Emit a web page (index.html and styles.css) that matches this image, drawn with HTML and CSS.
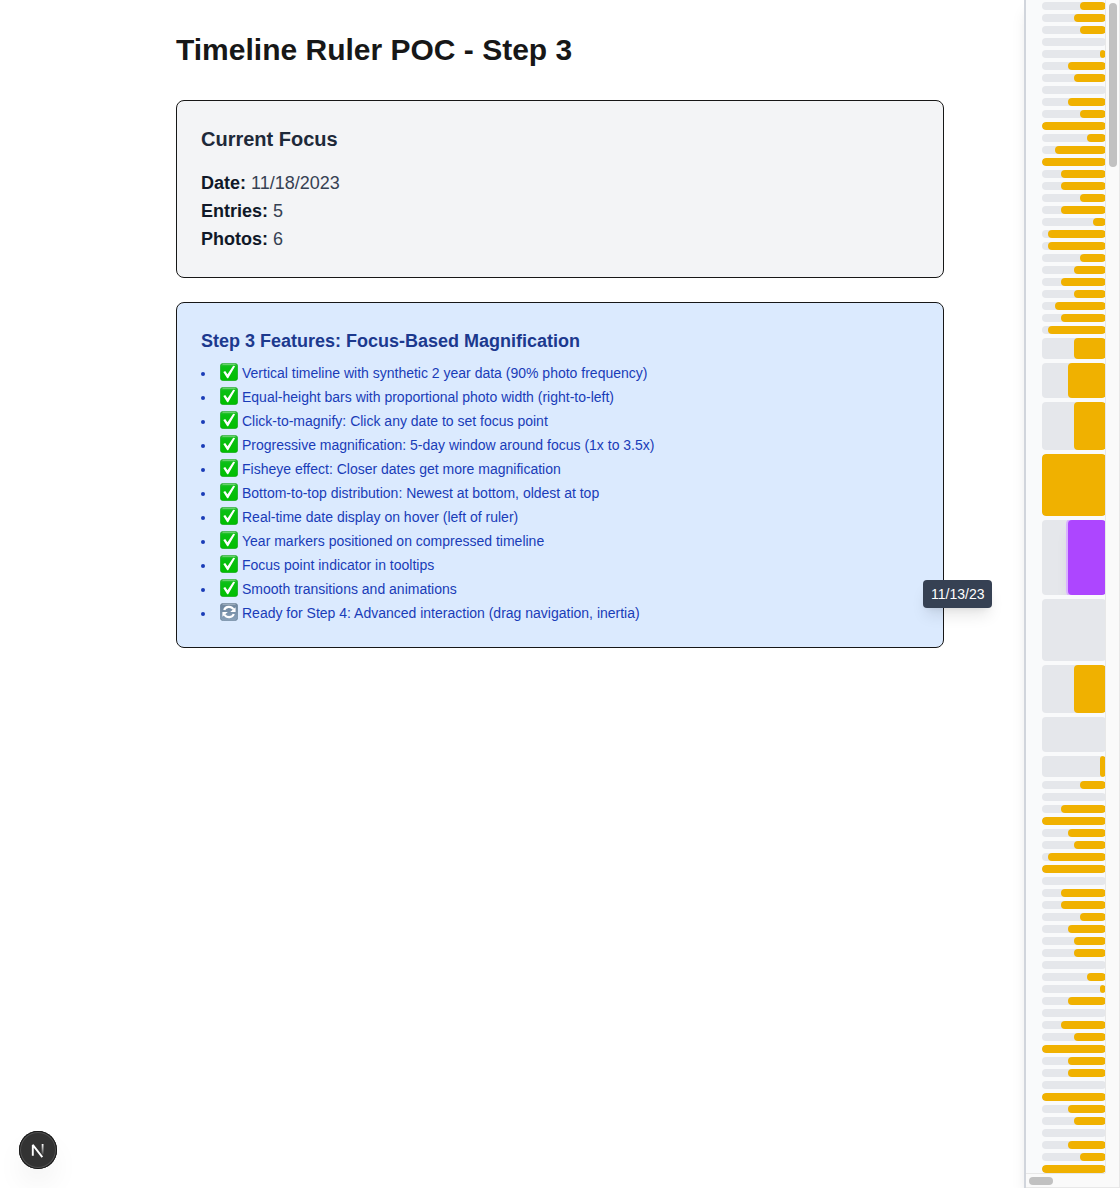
FILE: index.html
```html
<!DOCTYPE html>
<html lang="en">
<head>
<meta charset="utf-8">
<title>Timeline Ruler POC</title>
<link rel="stylesheet" href="styles.css">
</head>
<body>
<svg class="defs" aria-hidden="true">
  <defs>
    <linearGradient id="green" x1="0" y1="0" x2="0" y2="1"><stop offset="0" stop-color="#4cc452"/><stop offset=".2" stop-color="#0abf14"/><stop offset="1" stop-color="#00bf00"/></linearGradient>
    <linearGradient id="slate" x1="0" y1="0" x2="0" y2="1"><stop offset="0" stop-color="#8093a6"/><stop offset=".2" stop-color="#6f879f"/><stop offset="1" stop-color="#8aa2ba"/></linearGradient>
    <symbol id="check" viewBox="0 0 18 18">
      <rect x=".25" y=".25" width="17.5" height="17.5" rx="3.2" fill="url(#green)" stroke="#129a18" stroke-width=".5"/>
      <path d="M3 1.3h12" stroke="#8cdb90" stroke-width=".7" stroke-linecap="round"/>
      <path d="M3.3 9 5.2 8 7.5 11.3 13.2 2.7 15.1 3.2 8.2 15.2H7.2Z" fill="#fff"/>
    </symbol>
    <symbol id="refresh" viewBox="0 0 18 18">
      <rect x=".25" y=".25" width="17.5" height="17.5" rx="3.2" fill="url(#slate)" stroke="#5d748b" stroke-width=".5"/>
      <path d="M3 1.3h12" stroke="#b3c1ce" stroke-width=".7" stroke-linecap="round"/>
      <path d="M4.2 7C5.6 3.1 11.3 2.7 13.4 6.3M13.8 11C12.4 14.9 6.7 15.3 4.6 11.7" fill="none" stroke="#fff" stroke-width="2.2"/>
      <path d="M15.6 4.3V9H10.2ZM2.4 13.7V9H7.8Z" fill="#fff"/>
    </symbol>
  </defs>
</svg>
<div class="page">
  <main class="content">
    <h1 class="title">Timeline Ruler POC - Step 3</h1>
    <section class="card focus">
      <h2 class="focus-title">Current Focus</h2>
      <p class="fact"><strong>Date:</strong> 11/18/2023</p>
      <p class="fact"><strong>Entries:</strong> 5</p>
      <p class="fact"><strong>Photos:</strong> 6</p>
    </section>
    <section class="card features">
      <h3 class="features-title">Step 3 Features: Focus-Based Magnification</h3>
      <ul class="list">
        <li class="item"><svg class="mark"><use href="#check"/></svg>Vertical timeline with synthetic 2 year data (90% photo frequency)</li>
        <li class="item"><svg class="mark"><use href="#check"/></svg>Equal-height bars with proportional photo width (right-to-left)</li>
        <li class="item"><svg class="mark"><use href="#check"/></svg>Click-to-magnify: Click any date to set focus point</li>
        <li class="item"><svg class="mark"><use href="#check"/></svg>Progressive magnification: 5-day window around focus (1x to 3.5x)</li>
        <li class="item"><svg class="mark"><use href="#check"/></svg>Fisheye effect: Closer dates get more magnification</li>
        <li class="item"><svg class="mark"><use href="#check"/></svg>Bottom-to-top distribution: Newest at bottom, oldest at top</li>
        <li class="item"><svg class="mark"><use href="#check"/></svg>Real-time date display on hover (left of ruler)</li>
        <li class="item"><svg class="mark"><use href="#check"/></svg>Year markers positioned on compressed timeline</li>
        <li class="item"><svg class="mark"><use href="#check"/></svg>Focus point indicator in tooltips</li>
        <li class="item"><svg class="mark"><use href="#check"/></svg>Smooth transitions and animations</li>
        <li class="item"><svg class="mark"><use href="#refresh"/></svg>Ready for Step 4: Advanced interaction (drag navigation, inertia)</li>
      </ul>
    </section>
  </main>
  <aside class="ruler">
    <div class="bars" id="bars"></div>
    <div class="vscroll"><div class="vthumb"></div></div>
    <div class="hscroll"><div class="hthumb"></div></div>
    <div class="corner"></div>
  </aside>
</div>
<div class="tooltip">11/13/23</div>
<div class="badge">
  <svg width="38" height="38" viewBox="0 0 38 38">
    <path d="M13.8 24.7V13.9L23.3 26.2" fill="none" stroke="#fff" stroke-width="1.9" stroke-linejoin="bevel"/>
    <path d="M23.6 13v10.5" stroke="url(#nfade)" stroke-width="1.8"/>
    <defs><linearGradient id="nfade" gradientUnits="userSpaceOnUse" x1="0" y1="13" x2="0" y2="23.5"><stop offset="0" stop-color="#fff"/><stop offset="1" stop-color="#fff" stop-opacity=".1"/></linearGradient></defs>
  </svg>
</div>
<script src="ruler.js"></script>
</body>
</html>
```
FILE: ruler.js
```js
// Photo counts per day (0-10), oldest first.
const before = [4,5,4,0,1,6,5,0,6,4,10,3,8,10,7,7,4,7,2,9,9,4,5,7,5,8,7,9];
const magnified = [[5,21],[6,35],[5,48],[10,62],[6,75],[0,62],[5,48],[0,35],[1,21]];
const after = [4,0,7,10,6,5,9,10,0,7,7,4,6,5,5,0,3,1,6,0,7,5,10,6,6,0,10,6,5,0,6,4,10];
const days = [...before.map(n => [n, 8]), ...magnified, ...after.map(n => [n, 8])];
const focusIndex = before.length + 4;
const bars = document.getElementById('bars');
days.forEach(([photos, height], i) => {
  const track = document.createElement('div');
  track.className = 'track';
  track.style.height = height + 'px';
  if (photos) {
    const fill = document.createElement('div');
    fill.className = i === focusIndex ? 'fill active' : 'fill';
    fill.style.width = photos * 10 + '%';
    track.append(fill);
  }
  bars.append(track);
});
```
FILE: styles.css
```css
* { box-sizing: border-box; margin: 0; padding: 0; }
body {
  background: #fff;
  color: #171717;
  font-family: "Liberation Sans", Arial, Helvetica, sans-serif;
  overflow: hidden;
}
.defs { position: absolute; width: 0; height: 0; }
.page { display: flex; height: 1188px; }
.content { flex: 1; padding: 32px 80px 0 176px; }
.title { font-size: 30px; line-height: 36px; margin-bottom: 32px; }
.card { border: 1px solid #171717; border-radius: 8px; padding: 24px; }
.focus { background: #f3f4f6; margin-bottom: 24px; }
.focus-title { font-size: 20px; line-height: 28px; margin-bottom: 16px; color: #1e2939; }
.fact { font-size: 18px; line-height: 28px; color: #364153; }
.fact strong { color: #101828; }
.features { background: #dbeafe; }
.features-title { font-size: 18px; line-height: 28px; margin-bottom: 8px; color: #1c398e; }
.list { list-style: none; display: flex; flex-direction: column; gap: 4px; }
.item { display: flex; align-items: center; font-size: 14px; line-height: 20px; color: #193cb8; }
.item::before { content: ""; width: 4px; height: 4px; border-radius: 50%; background: #193cb8; margin: 2px 15px 0 0; }
.mark { width: 18px; height: 18px; margin: 0 4px 2px 0; }
.ruler {
  width: 96px;
  display: grid;
  grid-template: 1173px 15px / 79px 15px;
  background: #f9fafb;
  border-left: 2px solid #d1d5dc;
  box-shadow: 0 10px 15px -3px rgba(0,0,0,.1), 0 4px 6px -4px rgba(0,0,0,.1);
}
.bars { display: flex; flex-direction: column; gap: 4px; padding: 2px 0 0 16px; overflow: hidden; }
.track {
  width: 64px;
  flex: none;
  display: flex;
  justify-content: flex-end;
  background: #e5e7eb;
  border-radius: 4px;
  overflow: hidden;
}
.fill { background: #f0b100; border-radius: 4px; }
.active { background: #ad46ff; box-shadow: 0 0 0 2px #dab2ff, 0 10px 15px -3px rgba(0,0,0,.1), 0 4px 6px -4px rgba(0,0,0,.1); }
.vscroll { background: #fafafa; border: solid #e8e8e8; border-width: 0 1px; padding: 3px 2px 0 3px; }
.vthumb { height: 164px; width: 8px; border-radius: 4px; background: #c1c1c1; }
.hscroll { background: #fafafa; border: solid #e8e8e8; border-width: 1px 0; padding: 3px; }
.hthumb { height: 8px; width: 24px; border-radius: 4px; background: #c1c1c1; }
.corner { background: #fafafa; border: solid #e8e8e8; border-width: 0 1px 1px 0; }
.tooltip {
  position: absolute;
  left: 923px;
  top: 580px;
  padding: 4px 8px;
  border-radius: 4px;
  background: #364153;
  color: #fff;
  font-size: 14px;
  line-height: 20px;
  box-shadow: 0 10px 15px -3px rgba(0,0,0,.1), 0 4px 6px -4px rgba(0,0,0,.1);
}
.badge {
  position: absolute;
  left: 19px;
  top: 1131px;
  width: 38px;
  height: 38px;
  border-radius: 50%;
  background: #333;
  box-shadow: inset 0 0 0 1px #171717, inset 0 0 0 2px #505050, 0 16px 32px -8px rgba(0,0,0,.14);
}
```
